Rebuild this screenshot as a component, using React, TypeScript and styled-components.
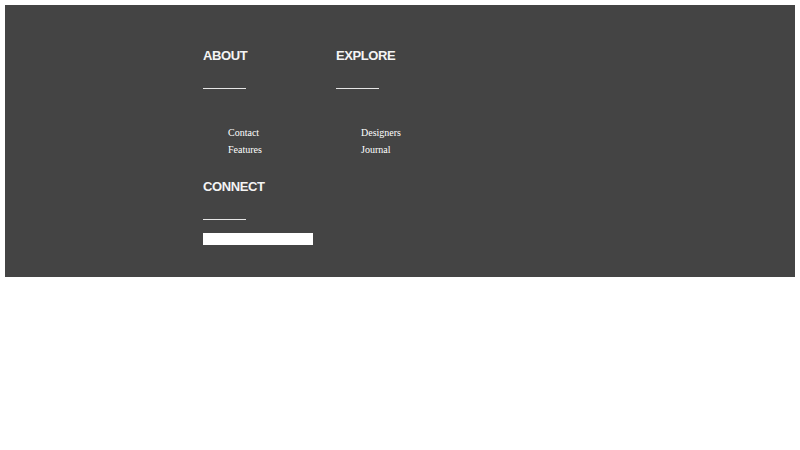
import React from 'react'
import styled, { createGlobalStyle } from 'styled-components'

const GlobalStyle = createGlobalStyle`
    body {
        margin: 5px;
        background: #ffffff;
        font-family: "Liberation Serif", "Times New Roman", serif;
    }
`

const sections = [
    { title: 'ABOUT', links: ['Contact', 'Features'] },
    { title: 'EXPLORE', links: ['Designers', 'Journal'] },
]

const App = () => {
    return (
        <>
            <GlobalStyle />
            <StyledFooter>
                <Columns>
                    {sections.map((section) => (
                        <Column key={section.title}>
                            <Heading>{section.title}</Heading>
                            <Rule />
                            <LinkList>
                                {section.links.map((link) => (
                                    <li key={link}><a href="/#">{link}</a></li>
                                ))}
                            </LinkList>
                        </Column>
                    ))}
                </Columns>
                <Connect>
                    <Heading>CONNECT</Heading>
                    <Rule />
                    <EmailInput type="text" aria-label="email" />
                </Connect>
            </StyledFooter>
        </>
    )
}

export default App

const StyledFooter = styled.footer`
    background: #444444;
    padding: 43px 0 32px 198px;
    color: #ffffff;
`

const Columns = styled.div`
    display: flex;
`

const Column = styled.div`
    width: 133px;
`

const Heading = styled.h4`
    margin: 0;
    font-family: "Liberation Sans", Arial, sans-serif;
    font-size: 13px;
    line-height: 15px;
    font-weight: bold;
    letter-spacing: -0.4px;
    color: #f4f4f4;
`

const Rule = styled.div`
    width: 43px;
    height: 1px;
    margin-top: 25px;
    background: #e6e6e6;
`

const LinkList = styled.ul`
    list-style: none;
    margin: 35px 0 0;
    padding: 0 0 0 25px;
    font-size: 10px;
    line-height: 17px;
    a {
        color: #ffffff;
        text-decoration: none;
    }
`

const Connect = styled.div`
    margin-top: 21px;
`

const EmailInput = styled.input`
    display: block;
    margin-top: 13px;
    width: 110px;
    height: 12px;
    padding: 0;
    border: none;
    background: #ffffff;
    outline: none;
`
